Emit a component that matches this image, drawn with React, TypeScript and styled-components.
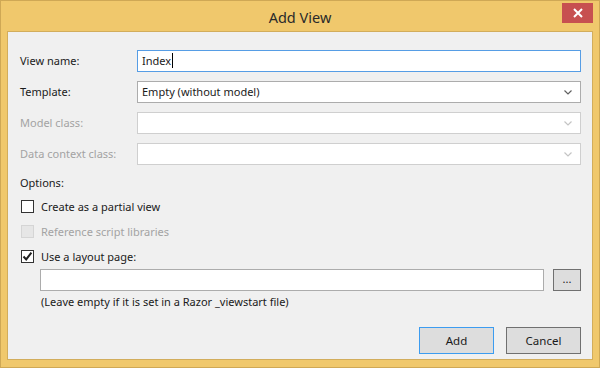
import React from "react";
import styled, { createGlobalStyle } from "styled-components";

const GlobalStyle = createGlobalStyle`
    html, body {
        margin: 0;
        padding: 0;
        background: #f0c86c;
    }
    body {
        font-family: "Noto Sans", "Open Sans", sans-serif;
        font-size: 11px;
        color: #1a1a1a;
    }
`;

const Window = styled.div`
    box-sizing: border-box;
    width: 600px;
    height: 368px;
    display: flex;
    flex-direction: column;
    background: #f0c86c;
    border: 1px solid #cfa855;
`;

const TitleBar = styled.div`
    height: 30px;
    display: grid;
    grid-template-columns: 1fr auto 1fr;
    align-items: start;
`;

const Title = styled.div`
    grid-column: 2;
    padding-top: 7px;
    font-size: 14.5px;
    line-height: 18px;
    color: #2a2a2a;
`;

const CloseButton = styled.div`
    grid-column: 3;
    justify-self: end;
    margin: 2px 6px 0 0;
    width: 31px;
    height: 20px;
    background: #c75050;
    display: flex;
    align-items: center;
    justify-content: center;
`;

const Client = styled.div`
    flex: 1;
    display: flex;
    flex-direction: column;
    margin: 0 6px 7px 6px;
    padding: 18px 11px 5px 12px;
    background: #f0f0f0;
    border: 1px solid #d2ad5c;
`;

const FieldGrid = styled.div`
    display: grid;
    grid-template-columns: 117px 1fr;
    grid-auto-rows: 22px;
    row-gap: 9px;
    align-items: center;
`;

const Label = styled.div<{ $disabled?: boolean }>`
    line-height: 16px;
    color: ${(p) => (p.$disabled ? "#a3a3a3" : "#1a1a1a")};
`;

const Box = styled.div<{ $focused?: boolean; $disabled?: boolean }>`
    box-sizing: border-box;
    height: 22px;
    display: flex;
    align-items: center;
    padding: 0 8px 0 4px;
    background: #ffffff;
    border: 1px solid
        ${(p) => (p.$focused ? "#569de5" : p.$disabled ? "#cfcfcf" : "#acacac")};
    color: #1a1a1a;
`;

const BoxText = styled.span`
    flex: 1;
    line-height: 16px;
    white-space: nowrap;
`;

const Caret = styled.span`
    display: inline-block;
    width: 1px;
    height: 15px;
    margin-left: 1px;
    vertical-align: -3px;
    background: #000;
`;

const Section = styled.div`
    margin-top: 10px;
    display: flex;
    flex-direction: column;
    gap: 5px;
`;

const CheckRow = styled.label<{ $disabled?: boolean }>`
    height: 20px;
    display: flex;
    align-items: center;
    gap: 7px;
    padding-left: 1px;
    color: ${(p) => (p.$disabled ? "#a3a3a3" : "#1a1a1a")};
`;

const CheckBox = styled.span<{ $disabled?: boolean }>`
    box-sizing: border-box;
    width: 13px;
    height: 13px;
    display: flex;
    align-items: center;
    justify-content: center;
    background: ${(p) => (p.$disabled ? "#e6e6e6" : "#ffffff")};
    border: 1px solid ${(p) => (p.$disabled ? "#d5d5d5" : "#333333")};
`;

const LayoutRow = styled.div`
    margin-top: 3px;
    padding-left: 20px;
    display: flex;
    gap: 9px;
`;

const LayoutInput = styled(Box)`
    flex: 1;
`;

const BrowseButton = styled.div`
    box-sizing: border-box;
    width: 28px;
    height: 22px;
    display: flex;
    align-items: center;
    justify-content: center;
    padding-bottom: 3px;
    background: #dddddd;
    border: 1px solid #707070;
`;

const Hint = styled.div`
    margin-top: 3px;
    padding-left: 21px;
    line-height: 16px;
`;

const Footer = styled.div`
    margin-top: auto;
    display: flex;
    justify-content: flex-end;
    gap: 12px;
`;

const Button = styled.div<{ $default?: boolean }>`
    box-sizing: border-box;
    width: 75px;
    height: 27px;
    display: flex;
    align-items: center;
    justify-content: center;
    font-size: 11.5px;
    background: #dddddd;
    border: 1px solid ${(p) => (p.$default ? "#3c9cf0" : "#707070")};
`;

function Chevron({ disabled }: { disabled?: boolean }) {
    return (
        <svg width="8" height="5" viewBox="0 0 8 5">
            <path
                d="M0.5 0.5 L4 4 L7.5 0.5"
                fill="none"
                stroke={disabled ? "#c4c4c4" : "#606060"}
                strokeWidth="1.2"
            />
        </svg>
    );
}

function CheckMark() {
    return (
        <svg width="11" height="11" viewBox="0 0 11 11">
            <path
                d="M1.5 5.5 L4.2 8.4 L9.4 1.6"
                fill="none"
                stroke="#1f1f1f"
                strokeWidth="2"
            />
        </svg>
    );
}

export default function App(): JSX.Element {
    return (
        <>
            <GlobalStyle />
            <Window>
                <TitleBar>
                    <Title>Add View</Title>
                    <CloseButton>
                        <svg width="10" height="10" viewBox="0 0 10 10">
                            <path
                                d="M1 1 L9 9 M9 1 L1 9"
                                stroke="#ffffff"
                                strokeWidth="2"
                            />
                        </svg>
                    </CloseButton>
                </TitleBar>
                <Client>
                    <FieldGrid>
                        <Label>View name:</Label>
                        <Box $focused>
                            <BoxText>
                                Index
                                <Caret />
                            </BoxText>
                        </Box>
                        <Label>Template:</Label>
                        <Box>
                            <BoxText>Empty (without model)</BoxText>
                            <Chevron />
                        </Box>
                        <Label $disabled>Model class:</Label>
                        <Box $disabled>
                            <BoxText />
                            <Chevron disabled />
                        </Box>
                        <Label $disabled>Data context class:</Label>
                        <Box $disabled>
                            <BoxText />
                            <Chevron disabled />
                        </Box>
                    </FieldGrid>
                    <Section>
                        <Label>Options:</Label>
                        <CheckRow>
                            <CheckBox />
                            Create as a partial view
                        </CheckRow>
                        <CheckRow $disabled>
                            <CheckBox $disabled />
                            Reference script libraries
                        </CheckRow>
                        <CheckRow>
                            <CheckBox>
                                <CheckMark />
                            </CheckBox>
                            Use a layout page:
                        </CheckRow>
                    </Section>
                    <LayoutRow>
                        <LayoutInput>
                            <BoxText />
                        </LayoutInput>
                        <BrowseButton>...</BrowseButton>
                    </LayoutRow>
                    <Hint>(Leave empty if it is set in a Razor _viewstart file)</Hint>
                    <Footer>
                        <Button $default>Add</Button>
                        <Button>Cancel</Button>
                    </Footer>
                </Client>
            </Window>
        </>
    );
}
